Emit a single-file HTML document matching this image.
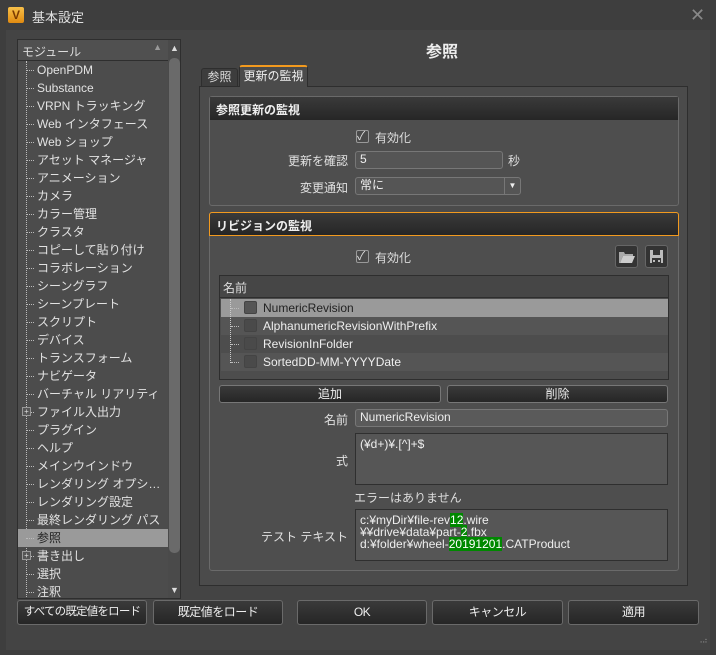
<!DOCTYPE html>
<html><head><meta charset="utf-8"><style>
*{box-sizing:border-box;margin:0;padding:0}
body{width:716px;height:655px;overflow:hidden;background:#3e3e3e;font-family:"Liberation Sans","Noto Sans CJK JP",sans-serif;font-size:12px;color:#ddd;position:relative}
.a{position:absolute}
.win{left:6px;top:30px;width:704px;height:620px;background:#444}
.list{left:17px;top:39px;width:164px;height:560px;background:#4c4c4c;border:1px solid #2e2e2e;overflow:hidden}
.lh{left:0;top:0;width:150px;height:21px;background:#505050;border-bottom:1px solid #2e2e2e;padding:3px 4px;color:#ddd}
.it{left:0;height:18px;width:150px;padding-left:19px;line-height:18px;color:#e2e2e2;white-space:nowrap}
.it:before{content:"";position:absolute;left:8px;top:9px;width:8px;border-top:1px dotted #bbb}
.vline{left:8px;top:21px;height:540px;border-left:1px dotted #bbb}
.sb{left:150px;top:0;width:13px;height:558px;background:#4a4a4a}
.thumb{left:151px;top:18px;width:11px;height:495px;background:#6a6a6a;border-radius:5px}
.btn{height:18px;border:1px solid #777;border-radius:3px;background:linear-gradient(#3a3a3a,#262626);text-align:center;line-height:16px;color:#eee}
.bb{height:25px;line-height:23px;border:1px solid #6a6a6a;border-radius:3px;background:linear-gradient(#3a3a3a,#262626);text-align:center;color:#eee;white-space:nowrap;letter-spacing:-0.5px;overflow:hidden}
.inp{background:#555;border:1px solid #777;border-radius:3px;padding:0 4px;color:#eee;line-height:15px}
.ta{background:#565656;border:1px solid #2f2f2f;padding:4px;color:#eee;line-height:12px;font-size:12px}
.g{background:#080;color:#fff}
.cb{width:13px;height:13px;border:1px solid #999;background:#4a4a4a;border-radius:2px}
.grp{border:1px solid #6a6a6a;border-radius:3px;background:#4e4e4e}
.gh{left:0;top:0;right:0;height:23px;background:linear-gradient(#3a3a3a,#262626);font-weight:bold;padding:4px 6px;color:#eee}
.lbl{text-align:right;color:#e0e0e0}
.row{left:1px;width:447px;height:18px;line-height:18px;padding-left:42px;color:#eee}
</style></head><body>
<div class="a" style="left:8px;top:7px;width:16px;height:16px;background:linear-gradient(#f7c04a,#e08a10);border-radius:2px;color:#7a3a00;font-weight:bold;font-size:12px;text-align:center;line-height:16px">V</div>
<div class="a" style="left:32px;top:7px;font-size:13px;color:#e0e0e0">基本設定</div>
<div class="a" style="left:690px;top:5px;font-size:18px;color:#888">✕</div>
<div class="a win"></div>

<div class="a list">
 <div class="a lh">モジュール<span style="position:absolute;right:6px;top:2px;color:#999;font-size:9px">▲</span></div>
 <div class="a vline"></div>
 <div class="a sb"></div>
 <div class="a" style="left:152px;top:3px;color:#ddd;font-size:9px">▲</div>
 <div class="a thumb"></div>
 <div class="a" style="left:152px;top:545px;color:#ddd;font-size:9px">▼</div>
 <div class="a it" style="top:21px">OpenPDM</div>
 <div class="a it" style="top:39px">Substance</div>
 <div class="a it" style="top:57px">VRPN トラッキング</div>
 <div class="a it" style="top:75px">Web インタフェース</div>
 <div class="a it" style="top:93px">Web ショップ</div>
 <div class="a it" style="top:111px">アセット マネージャ</div>
 <div class="a it" style="top:129px">アニメーション</div>
 <div class="a it" style="top:147px">カメラ</div>
 <div class="a it" style="top:165px">カラー管理</div>
 <div class="a it" style="top:183px">クラスタ</div>
 <div class="a it" style="top:201px">コピーして貼り付け</div>
 <div class="a it" style="top:219px">コラボレーション</div>
 <div class="a it" style="top:237px">シーングラフ</div>
 <div class="a it" style="top:255px">シーンプレート</div>
 <div class="a it" style="top:273px">スクリプト</div>
 <div class="a it" style="top:291px">デバイス</div>
 <div class="a it" style="top:309px">トランスフォーム</div>
 <div class="a it" style="top:327px">ナビゲータ</div>
 <div class="a it" style="top:345px">バーチャル リアリティ</div>
 <div class="a it" style="top:363px">ファイル入出力</div>
 <div class="a it" style="top:381px">プラグイン</div>
 <div class="a it" style="top:399px">ヘルプ</div>
 <div class="a it" style="top:417px">メインウインドウ</div>
 <div class="a it" style="top:435px">レンダリング オプシ…</div>
 <div class="a it" style="top:453px">レンダリング設定</div>
 <div class="a it" style="top:471px">最終レンダリング パス</div>
 <div class="a it" style="top:489px;background:#9a9a9a;color:#222">参照</div>
 <div class="a it" style="top:507px">書き出し</div>
 <div class="a it" style="top:525px">選択</div>
 <div class="a it" style="top:543px">注釈</div>
 <div class="a" style="left:4px;top:367px;width:9px;height:9px;border:1px solid #999;background:#555;font-size:8px;line-height:7px;text-align:center">+</div>
 <div class="a" style="left:4px;top:511px;width:9px;height:9px;border:1px solid #999;background:#555;font-size:8px;line-height:7px;text-align:center">+</div>
</div>

<div class="a" style="left:426px;top:38px;font-size:16px;font-weight:bold;color:#eee">参照</div>

<div class="a" style="left:199px;top:86px;width:489px;height:500px;border:1px solid #2e2e2e;background:#4b4b4b"></div>
<div class="a" style="left:201px;top:68px;width:37px;height:19px;background:#3d3d3d;border:1px solid #2e2e2e;border-radius:3px 3px 0 0;text-align:center;line-height:17px">参照</div>
<div class="a" style="left:239px;top:65px;width:69px;height:22px;background:#4b4b4b;border:1px solid #2e2e2e;border-top:2px solid #f39a1e;border-bottom:none;border-radius:3px 3px 0 0;text-align:center;line-height:19px;color:#eee">更新の監視</div>

<div class="a grp" style="left:209px;top:96px;width:470px;height:110px">
 <div class="a gh">参照更新の監視</div>
</div>
<div class="a cb" style="left:356px;top:130px"></div><div class="a" style="left:357px;top:127px;color:#ddd;font-size:12px">✓</div>
<div class="a" style="left:375px;top:129px">有効化</div>
<div class="a lbl" style="left:250px;width:98px;top:152px">更新を確認</div>
<div class="a inp" style="left:355px;top:151px;width:148px;height:18px">5</div>
<div class="a" style="left:508px;top:152px">秒</div>
<div class="a lbl" style="left:250px;width:98px;top:179px">変更通知</div>
<div class="a inp" style="left:355px;top:177px;width:166px;height:18px">常に<span style="position:absolute;right:0;top:0;width:16px;height:16px;border-left:1px solid #777;font-size:8px;text-align:center;line-height:16px">▼</span></div>

<div class="a grp" style="left:209px;top:212px;width:470px;height:359px">
 <div class="a gh" style="left:-1px;right:-1px;top:-1px;height:24px;border:1px solid #f39a1e;border-radius:3px 3px 0 0">リビジョンの監視</div>
</div>
<div class="a cb" style="left:356px;top:250px"></div><div class="a" style="left:357px;top:247px;color:#ddd">✓</div>
<div class="a" style="left:375px;top:249px">有効化</div>
<div class="a" style="left:615px;top:245px;width:23px;height:23px;border:1px solid #666;border-radius:3px;background:#333">
 <svg width="21" height="21" viewBox="0 0 21 21"><path d="M3 6h5l1 2h8v2H7l-3 7H3z" fill="#aaa"/><path d="M7 10h12l-3 7H4z" fill="#ccc"/></svg></div>
<div class="a" style="left:645px;top:245px;width:23px;height:23px;border:1px solid #666;border-radius:3px;background:#333">
 <svg width="21" height="21" viewBox="0 0 21 21"><path d="M4 4h13v13H4z" fill="#bbb"/><path d="M7 4h7v5H7z" fill="#333"/><path d="M6 12h9v5H6z" fill="#333"/><path d="M7 14h2v2H7zM12 14h2v2h-2z" fill="#bbb"/></svg></div>

<div class="a" style="left:219px;top:275px;width:450px;height:105px;background:#4d4d4d;border:1px solid #2e2e2e">
 <div class="a" style="left:0;top:0;width:448px;height:22px;background:#464646;border-bottom:1px solid #2e2e2e;padding:3px 3px">名前</div>
 <div class="a row" style="top:23px;background:#9a9a9a;color:#222">NumericRevision</div>
 <div class="a row" style="top:41px;background:#555">AlphanumericRevisionWithPrefix</div>
 <div class="a row" style="top:59px;background:#4d4d4d">RevisionInFolder</div>
 <div class="a row" style="top:77px;background:#555">SortedDD-MM-YYYYDate</div>
 <div class="a" style="left:10px;top:23px;height:64px;border-left:1px dotted #ccc"></div>
 <div class="a cb" style="left:24px;top:25px;background:#555;border-color:#444"></div>
 <div class="a cb" style="left:24px;top:43px;border-color:#444"></div>
 <div class="a cb" style="left:24px;top:61px;border-color:#444"></div>
 <div class="a cb" style="left:24px;top:79px;border-color:#444"></div>
 <div class="a" style="left:11px;top:32px;width:8px;border-top:1px dotted #bbb"></div>
 <div class="a" style="left:11px;top:50px;width:8px;border-top:1px dotted #bbb"></div>
 <div class="a" style="left:11px;top:68px;width:8px;border-top:1px dotted #bbb"></div>
 <div class="a" style="left:11px;top:86px;width:8px;border-top:1px dotted #bbb"></div>
</div>
<div class="a btn" style="left:219px;top:385px;width:222px">追加</div>
<div class="a btn" style="left:447px;top:385px;width:221px">削除</div>
<div class="a lbl" style="left:250px;width:98px;top:411px">名前</div>
<div class="a inp" style="left:355px;top:409px;width:313px;height:18px;background:#5a5a5a">NumericRevision</div>
<div class="a lbl" style="left:250px;width:98px;top:452px">式</div>
<div class="a ta" style="left:355px;top:433px;width:313px;height:52px">(¥d+)¥.[^]+$</div>
<div class="a" style="left:354px;top:489px">エラーはありません</div>
<div class="a lbl" style="left:250px;width:98px;top:528px">テスト テキスト</div>
<div class="a ta" style="left:355px;top:509px;width:313px;height:52px">c:¥myDir¥file-rev<span class="g">12</span>.wire<br>¥¥drive¥data¥part-<span class="g">2</span>.fbx<br>d:¥folder¥wheel-<span class="g">20191201</span>.CATProduct</div>

<div class="a bb" style="left:17px;top:600px;width:130px;font-size:11.5px;letter-spacing:-0.8px">すべての既定値をロード</div>
<div class="a bb" style="left:153px;top:600px;width:130px">既定値をロード</div>
<div class="a bb" style="left:297px;top:600px;width:130px">OK</div>
<div class="a bb" style="left:432px;top:600px;width:131px">キャンセル</div>
<div class="a bb" style="left:568px;top:600px;width:131px">適用</div>
<div class="a" style="left:697px;top:636px;font-size:8px;color:#888;letter-spacing:-1px">⠠⠴</div>
</body></html>
